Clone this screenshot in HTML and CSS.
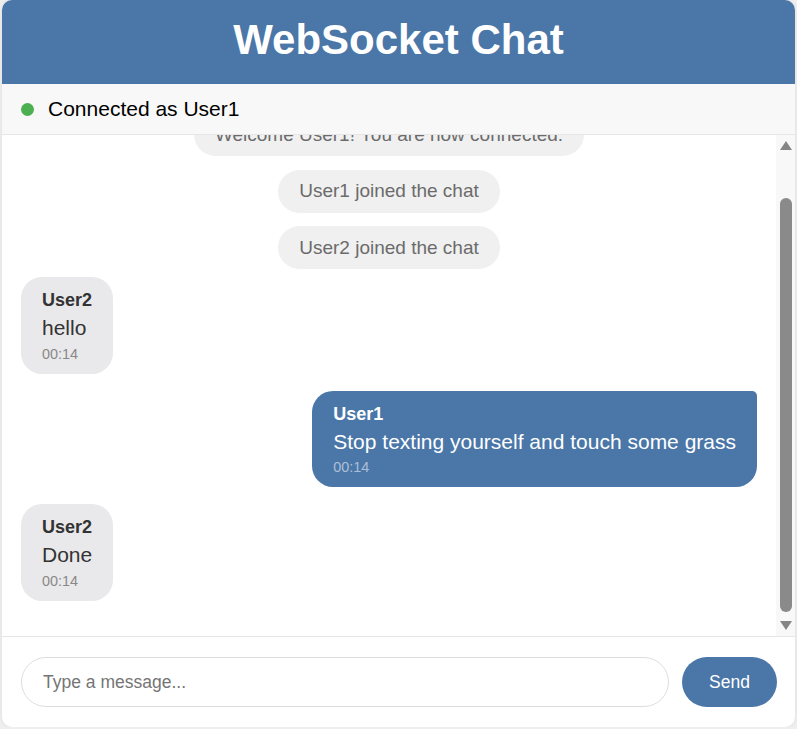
FILE: index.html
```html
<!DOCTYPE html>
<html lang="en">
<head>
<meta charset="utf-8">
<title>WebSocket Chat</title>
<link rel="stylesheet" href="styles.css">
</head>
<body>
<div class="chat">
  <header class="chat-header">
    <h1 class="chat-title">WebSocket Chat</h1>
  </header>
  <div class="status">
    <span class="status-dot"></span>
    <span class="status-text">Connected as User1</span>
  </div>
  <div class="messages-wrap">
    <div class="messages" id="messages">
      <div class="system">Welcome User1! You are now connected.</div>
      <div class="system">User1 joined the chat</div>
      <div class="system">User2 joined the chat</div>
      <div class="message received">
        <div class="username">User2</div>
        <div class="text">hello</div>
        <div class="time">00:14</div>
      </div>
      <div class="message sent">
        <div class="username">User1</div>
        <div class="text">Stop texting yourself and touch some grass</div>
        <div class="time">00:14</div>
      </div>
      <div class="message received">
        <div class="username">User2</div>
        <div class="text">Done</div>
        <div class="time">00:14</div>
      </div>
    </div>
    <div class="scrollbar" aria-hidden="true">
      <span class="scroll-arrow scroll-up"></span>
      <span class="scroll-thumb"></span>
      <span class="scroll-arrow scroll-down"></span>
    </div>
  </div>
  <div class="composer">
    <input class="composer-input" type="text" placeholder="Type a message...">
    <button class="send-button" type="button">Send</button>
  </div>
</div>
<script src="script.js"></script>
</body>
</html>
```

FILE: styles.css
```css
* {
  box-sizing: border-box;
}

body {
  margin: 0;
  padding: 0 2px;
  background: #efefef;
  font-family: "Liberation Sans", Arial, sans-serif;
}

.chat {
  height: 727px;
  background: #ffffff;
  border-radius: 10px;
  overflow: hidden;
  display: flex;
  flex-direction: column;
  box-shadow: 0 0 4px rgba(0, 0, 0, 0.08);
}

.chat-header {
  height: 84px;
  padding-top: 16px;
  background: #4a76a8;
  color: #ffffff;
  text-align: center;
  flex-shrink: 0;
}

.chat-title {
  margin: 0;
  font-size: 42px;
  font-weight: bold;
}

.status {
  display: flex;
  align-items: center;
  padding: 13px 19px;
  background: #f8f8f8;
  border-bottom: 1px solid #e6e6e6;
  font-size: 21px;
  color: #000000;
  flex-shrink: 0;
}

.status-dot {
  width: 13px;
  height: 13px;
  border-radius: 50%;
  background: #4caf50;
  margin-right: 14px;
}

.messages-wrap {
  flex: 1;
  min-height: 0;
  display: flex;
}

.messages {
  flex: 1;
  min-width: 0;
  overflow: hidden;
  padding: 19px 19px 18px;
  display: flex;
  flex-direction: column;
}

.scrollbar {
  width: 19px;
  flex-shrink: 0;
  background: #f8f8f8;
  display: flex;
  flex-direction: column;
  align-items: center;
  padding-left: 1px;
}

.scroll-arrow {
  width: 0;
  height: 0;
  border-left: 6px solid transparent;
  border-right: 6px solid transparent;
}

.scroll-up {
  margin-top: 6px;
  border-bottom: 9px solid #858585;
}

.scroll-down {
  margin-top: auto;
  margin-bottom: 6px;
  border-top: 9px solid #858585;
}

.scroll-thumb {
  width: 12px;
  height: 414px;
  margin-top: 48px;
  border-radius: 6px;
  background: #8a8a8a;
}

.system {
  align-self: center;
  background: #f0f0f0;
  color: #6b6b6b;
  font-size: 19px;
  padding: 10.5px 21px;
  border-radius: 22px;
  margin-bottom: 8px;
  flex-shrink: 0;
}

.system + .system {
  margin-top: 5.5px;
}

.message {
  max-width: 70%;
  padding: 13px 21px 12px;
  border-radius: 21px;
  margin-bottom: 17px;
  flex-shrink: 0;
}

.received {
  align-self: flex-start;
  background: #e9e9eb;
  color: #333333;
}

.sent {
  align-self: flex-end;
  background: #4a76a8;
  color: #ffffff;
  border-top-right-radius: 5px;
}

.username {
  font-size: 18px;
  font-weight: bold;
  margin-bottom: 5px;
}

.text {
  font-size: 21px;
}

.time {
  font-size: 14.4px;
  margin-top: 5.5px;
  color: #888888;
}

.sent .time {
  color: rgba(255, 255, 255, 0.55);
}

.composer {
  display: flex;
  gap: 13px;
  padding: 20px 18px 20px 19px;
  border-top: 1px solid #e6e6e6;
  flex-shrink: 0;
}

.composer-input {
  flex: 1;
  height: 50px;
  border: 1px solid #dddddd;
  border-radius: 25px;
  padding: 0 21px;
  font-family: "Liberation Sans", Arial, sans-serif;
  font-size: 17.5px;
  color: #333333;
  outline: none;
}

.composer-input::placeholder {
  color: #757575;
}

.send-button {
  width: 95px;
  height: 50px;
  border: none;
  border-radius: 25px;
  background: #4a76a8;
  color: #ffffff;
  font-family: "Liberation Sans", Arial, sans-serif;
  font-size: 17.5px;
}
```

FILE: script.js
```js
var list = document.getElementById('messages');
list.scrollTop = list.scrollHeight;
```
